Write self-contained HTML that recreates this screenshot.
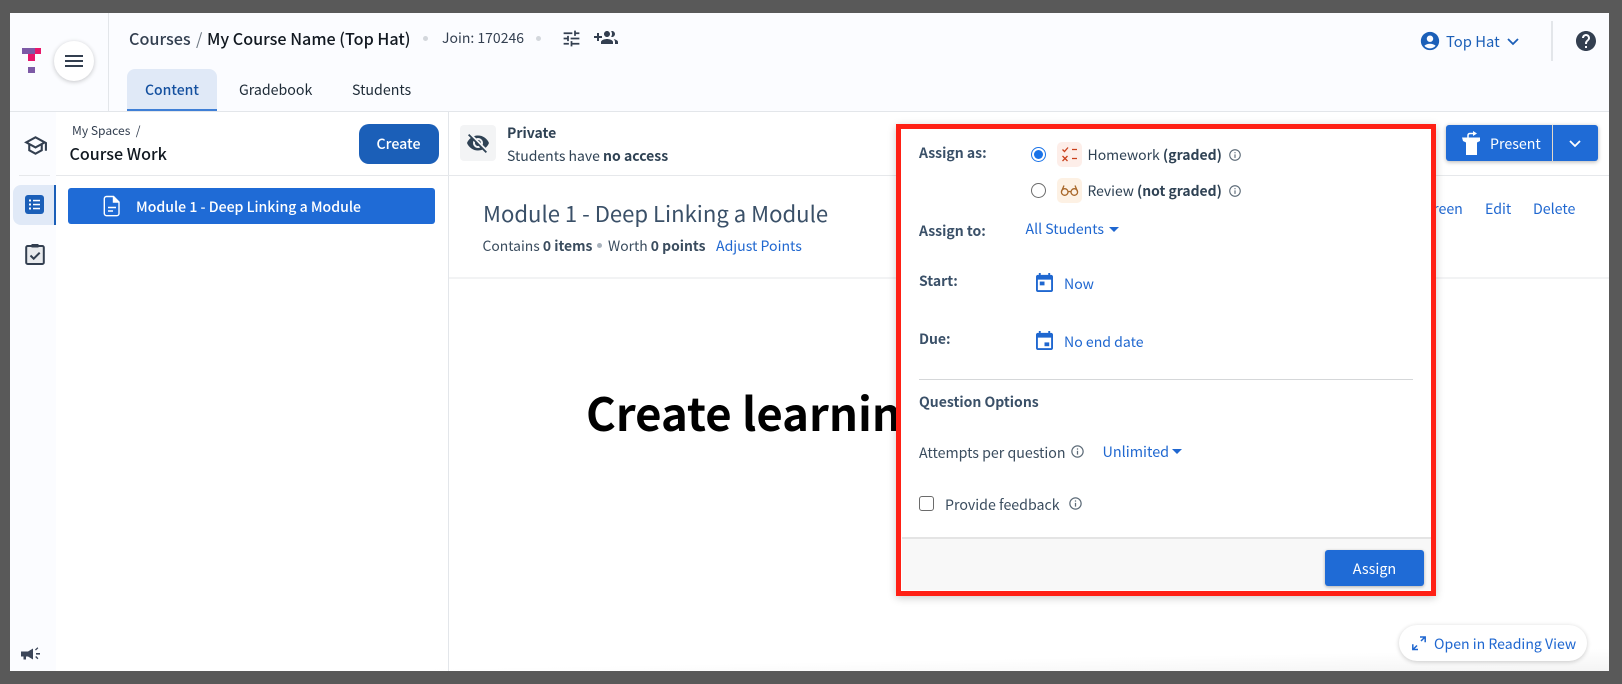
<!DOCTYPE html>
<html><head><meta charset="utf-8"><style>
html,body{margin:0;padding:0;width:1622px;height:684px;overflow:hidden;background:#595959}
body{font-family:"Noto Sans CJK JP","Liberation Sans",sans-serif;position:relative;font-size:14px;color:#2f4254}
.a{position:absolute}
.t{position:absolute;white-space:nowrap;line-height:20px;height:20px}
b{font-weight:500}
svg{position:absolute;display:block}
.l{color:#1f67d0}
</style></head><body>
<svg width="0" height="0" style="position:absolute"><defs>
<symbol id="info" viewBox="0 0 24 24"><path d="M11 7h2v2h-2zm0 4h2v6h-2zm1-9C6.48 2 2 6.48 2 12s4.48 10 10 10 10-4.48 10-10S17.52 2 12 2zm0 18c-4.41 0-8-3.59-8-8s3.59-8 8-8 8 3.59 8 8-3.59 8-8 8z"/></symbol>
</defs></svg>
<div class="a" id="frame" style="left:10px;top:13px;width:1599px;height:658px;background:#fff;overflow:hidden">
<div class="a" style="left:0;top:0;width:1599px;height:98px;background:#fbfcff;border-bottom:1px solid #e3e6ea;box-sizing:content-box"></div>
<div class="a" style="left:98px;top:0;width:1px;height:98px;background:#e3e6ea"></div>
<div class="a" style="left:0;top:99px;width:46px;height:559px;background:#fbfcff"></div>
<div class="a" style="left:438px;top:99px;width:1px;height:559px;background:#e3e6ea"></div>
<div class="a" style="left:46px;top:162px;width:1553px;height:1px;background:#e6e8eb"></div>
<div class="a" style="left:9px;top:162px;width:31px;height:1px;background:#e6e8eb"></div>
<div class="a" style="left:439px;top:264px;width:1160px;height:2px;background:#f2f3f4"></div>
<div class="a" style="left:0;top:630px;width:1599px;height:28px;background:linear-gradient(to bottom right,rgba(255,255,255,0) 60%,#f4f4f4)"></div>
</div>

<!-- logo -->
<div class="a" style="left:22px;top:48px;width:13px;height:6px;background:#7d5aa6"></div>
<div class="a" style="left:35px;top:48px;width:6px;height:6px;background:#e8176b"></div>
<div class="a" style="left:28px;top:54px;width:7px;height:7px;background:#e8176b"></div>
<div class="a" style="left:28px;top:67px;width:7px;height:6px;background:#7d5aa6"></div>
<div class="a" style="left:54px;top:41px;width:40px;height:40px;border-radius:50%;background:#fff;box-shadow:0 1px 5px rgba(0,0,0,.22)"></div>
<svg style="left:62px;top:49px" width="24" height="24" viewBox="0 0 24 24" fill="#333f50"><path d="M3 18h18v-2H3v2zm0-5h18v-2H3v2zm0-7v2h18V6H3z"/></svg>

<!-- header -->
<div class="t" style="left:129px;top:28px;font-size:16.2px;font-weight:500;color:#333f50">Courses</div>
<div class="t" style="left:196px;top:28px;font-size:16.2px;color:#6d7782">/</div>
<div class="t" style="left:207px;top:28px;font-size:16.15px;font-weight:500;color:#111820">My Course Name (Top Hat)</div>
<div class="a" style="left:423px;top:36px;width:5px;height:5px;border-radius:50%;background:#d3d7dc"></div>
<div class="t" style="left:442px;top:28px;font-size:14px;color:#333f50">Join: 170246</div>
<div class="a" style="left:536px;top:36px;width:5px;height:5px;border-radius:50%;background:#d3d7dc"></div>
<svg style="left:561px;top:28px" width="21" height="21" viewBox="0 0 24 24" fill="#333f50"><path d="M3 17v2h6v-2H3zM3 5v2h10V5H3zm10 16v-2h8v-2h-8v-2h-2v6h2zM7 9v2H3v2h4v2h2V9H7zm14 4v-2H11v2h10zm-6-4h2V7h4V5h-4V3h-2v6z"/></svg>
<svg style="left:594px;top:26px" width="24" height="24" viewBox="0 0 24 24" fill="#333f50"><path d="M8 10H5V7H3v3H0v2h3v3h2v-3h3v-2zm10 1c1.66 0 2.99-1.34 2.99-3S19.66 5 18 5c-.32 0-.63.05-.91.14.57.81.9 1.79.9 2.86s-.34 2.04-.9 2.86c.28.09.59.14.91.14zm-5 0c1.66 0 2.99-1.34 2.99-3S14.66 5 13 5c-1.66 0-3 1.34-3 3s1.34 3 3 3zm6.62 2.16c.83.73 1.38 1.66 1.38 2.84v2h3v-2c0-1.54-2.37-2.49-4.38-2.84zM13 13c-2 0-6 1-6 3v2h12v-2c0-2-4-3-6-3z"/></svg>
<div class="a" style="left:127px;top:69px;width:90px;height:42px;box-sizing:border-box;background:#e0e9f7;border-radius:8px 8px 0 0;border-bottom:2px solid #3f7fd6"></div>
<div class="t" style="left:145px;top:80px;font-size:14px;font-weight:500;color:#14509f">Content</div>
<div class="t" style="left:239px;top:80px;font-size:14.2px;color:#1d2a36">Gradebook</div>
<div class="t" style="left:352px;top:80px;font-size:14.2px;color:#1d2a36">Students</div>

<svg style="left:1419px;top:30px" width="22" height="22" viewBox="0 0 24 24" fill="#1b5fb8"><path d="M12 2C6.48 2 2 6.48 2 12s4.48 10 10 10 10-4.48 10-10S17.52 2 12 2zm0 4c1.93 0 3.5 1.57 3.5 3.5S13.93 13 12 13s-3.5-1.57-3.5-3.5S10.07 6 12 6zm0 14c-2.03 0-4.43-.82-6.14-2.88C7.55 15.8 9.68 15 12 15s4.45.8 6.14 2.12C16.43 19.18 14.03 20 12 20z"/></svg>
<div class="t" style="left:1446px;top:32px;font-size:14.8px;color:#1b5fb8">Top Hat</div>
<svg style="left:1506px;top:36px" width="14" height="12" viewBox="0 0 14 12" fill="none" stroke="#1b5fb8" stroke-width="1.8"><path d="M2 3l5 5 5-5"/></svg>
<div class="a" style="left:1551px;top:21px;width:2px;height:40px;background:#e3e6ea"></div>
<svg style="left:1574px;top:29px" width="24" height="24" viewBox="0 0 24 24" fill="#333f50"><path d="M12 2C6.48 2 2 6.48 2 12s4.48 10 10 10 10-4.48 10-10S17.52 2 12 2zm1 17h-2v-2h2v2zm2.07-7.75l-.9.92C13.45 12.9 13 13.5 13 15h-2v-.5c0-1.1.45-2.1 1.17-2.83l1.24-1.26c.37-.36.59-.86.59-1.41 0-1.1-.9-2-2-2s-2 .9-2 2H8c0-2.21 1.79-4 4-4s4 1.79 4 4c0 .88-.36 1.68-.93 2.25z"/></svg>

<!-- rail -->
<svg style="left:23px;top:133px" width="25" height="25" viewBox="0 0 24 24" fill="#333f50"><path d="M12 3L1 9l4 2.18v6L12 21l7-3.82v-6l2-1.09V17h2V9L12 3zm6.82 6L12 12.72 5.18 9 12 5.28 18.82 9zM17 15.99l-5 2.73-5-2.73v-3.72L12 15l5-2.73v3.72z"/></svg>
<div class="a" style="left:13px;top:185px;width:43px;height:40px;box-sizing:border-box;background:#e0e9f7;border-right:2px solid #1b5fb8;border-radius:8px 0 0 8px"></div>
<div class="a" style="left:25px;top:195px;width:19px;height:19px;border-radius:3px;background:#1b5fb8"></div>
<svg style="left:25px;top:195px" width="19" height="19" viewBox="0 0 19 19" fill="#fff"><rect x="4" y="4.5" width="2" height="2"/><rect x="4" y="8.5" width="2" height="2"/><rect x="4" y="12.5" width="2" height="2"/><rect x="8" y="4.8" width="7" height="1.5"/><rect x="8" y="8.8" width="7" height="1.5"/><rect x="8" y="12.8" width="7" height="1.5"/></svg>
<svg style="left:23px;top:242px" width="24" height="25" viewBox="0 0 24 25" fill="none"><rect x="3.2" y="4" width="17.6" height="18" rx="1.5" fill="#e9ebee" stroke="#333f50" stroke-width="2"/><rect x="8.5" y="2" width="7" height="3.5" fill="#333f50"/><path d="M7.5 13.5l3.2 3.2 6-6" stroke="#333f50" stroke-width="2"/></svg>
<svg style="left:20px;top:646px" width="21" height="16" viewBox="0 0 21 16" fill="#3b4558"><path d="M1 5.5h7l5-3v11l-5-3H6v3H3.5v-3H1z"/><rect x="16" y="7" width="4" height="1.6"/><path d="M15 3.5l2.5-2.2.8 1-2.4 2.2zM15.2 11l1-1 2.2 2.2-1 1z"/></svg>

<!-- left panel -->
<div class="t" style="left:72px;top:121px;font-size:12.1px;color:#333f50">My Spaces&nbsp;&nbsp;/</div>
<div class="t" style="left:69.5px;top:143px;font-size:16.1px;font-weight:500;color:#111820">Course Work</div>
<div class="a" style="left:359px;top:124px;width:80px;height:40px;background:#1b5fb8;border-radius:10px"></div>
<div class="t" style="left:358.5px;top:134px;width:80px;text-align:center;font-size:14.2px;font-weight:500;color:#fff">Create</div>
<div class="a" style="left:68px;top:188px;width:367px;height:36px;background:#1f6bd6;border-radius:3px"></div>
<svg style="left:103px;top:195px" width="18" height="22" viewBox="0 0 18 22" fill="none" stroke="#fff" stroke-width="1.4"><path d="M3.5 1.5h7l5.5 5.5v11.5a2.2 2.2 0 0 1-2.2 2.2H3.5a2.2 2.2 0 0 1-2.2-2.2V3.7a2.2 2.2 0 0 1 2.2-2.2z"/><path d="M10.5 1.5v5.5H16" fill="#fff"/><path d="M5 12.5h8M5 16h5" stroke-width="1.6"/></svg>
<div class="t" style="left:136px;top:197px;font-size:14.1px;font-weight:500;color:#fff">Module 1 - Deep Linking a Module</div>

<!-- private -->
<div class="a" style="left:460px;top:125px;width:36px;height:36px;background:#f3f4f5;border-radius:4px"></div>
<svg style="left:466px;top:131px" width="24" height="24" viewBox="0 0 24 24" fill="#2f4254"><path d="M12 7c2.76 0 5 2.24 5 5 0 .65-.13 1.26-.36 1.83l2.92 2.92c1.51-1.26 2.7-2.89 3.43-4.75-1.73-4.39-6-7.5-11-7.5-1.4 0-2.74.25-3.98.7l2.16 2.16C10.74 7.13 11.35 7 12 7zM2 4.27l2.28 2.28.46.46C3.08 8.3 1.78 10.02 1 12c1.73 4.39 6 7.5 11 7.5 1.55 0 3.03-.3 4.38-.84l.42.42L19.73 22 21 20.73 3.27 3 2 4.27zM7.53 9.8l1.55 1.55c-.05.21-.08.43-.08.65 0 1.66 1.34 3 3 3 .22 0 .44-.03.65-.08l1.55 1.55c-.67.33-1.41.53-2.2.53-2.76 0-5-2.24-5-5 0-.79.2-1.53.53-2.2zm4.31-.78l3.15 3.15.02-.16c0-1.66-1.34-3-3-3l-.17.01z"/></svg>
<div class="t" style="left:507px;top:123px;font-size:14px;font-weight:700;color:#2f4254">Private</div>
<div class="t" style="left:507px;top:146px;font-size:14px;color:#2f4254">Students have <b style="font-weight:700">no access</b></div>

<div class="t" style="left:483px;top:201px;height:24px;line-height:24px;font-size:22.1px;color:#3a5068">Module 1 - Deep Linking a Module</div>
<div class="t" style="left:482.5px;top:236px;font-size:13.9px;color:#3a4c5e">Contains <b style="font-weight:700">0 items</b></div>
<div class="a" style="left:597px;top:243px;width:5px;height:5px;border-radius:50%;background:#a9b3bd"></div>
<div class="t" style="left:608px;top:236px;font-size:13.9px;color:#3a4c5e">Worth <b style="font-weight:700">0 points</b></div>
<div class="t l" style="left:716px;top:236px;font-size:14.1px">Adjust Points</div>

<div class="t" style="left:586px;top:392px;height:40px;line-height:40px;font-size:45.5px;font-weight:700;color:#000">Create learning</div>

<!-- right -->
<div class="a" style="left:1446px;top:125px;width:152px;height:36px;background:#1f6bd6;border-radius:3px;box-shadow:0 1px 4px rgba(0,0,0,.3)"></div>
<div class="a" style="left:1552px;top:125px;width:1px;height:36px;background:#e5d9c8"></div>
<svg style="left:1461px;top:131px" width="20" height="25" viewBox="0 0 20 25" fill="#fff"><path d="M1 6.5h18v3.5l-3 1.5V24H5V11.5L2 10z"/><path d="M7 6.5V4.5q0-2 2-2h4" fill="none" stroke="#fff" stroke-width="1.5"/><path d="M12 0l4 2.5-4 2.5z"/></svg>
<div class="t" style="left:1490px;top:134px;font-size:14.2px;color:#fff">Present</div>
<svg style="left:1568px;top:138px" width="14" height="12" viewBox="0 0 14 12" fill="none" stroke="#fff" stroke-width="1.8"><path d="M2 3l5 5 5-5"/></svg>
<div class="t l" style="left:1485px;top:199px;font-size:14.2px">Edit</div>
<div class="t l" style="left:1533px;top:199px;font-size:14.2px">Delete</div>
<div class="t l" style="left:1390px;top:199px;font-size:14.2px">Full Screen</div>

<div class="a" style="left:1399px;top:625px;width:188px;height:36px;border-radius:18px;background:#fff;box-shadow:0 1px 5px rgba(0,0,0,.2)"></div>
<svg style="left:1411px;top:635px" width="16" height="16" viewBox="0 0 16 16" fill="none" stroke="#1f67d0" stroke-width="1.5"><path d="M9 2h5.2v5.2M14 2L10 6M7 14.5H1.8V9.3M2 14.5L6 10.5"/></svg>
<div class="t l" style="left:1434px;top:634px;font-size:14.1px">Open in Reading View</div>

<!-- popover -->
<div class="a" style="left:896px;top:124px;width:540px;height:472px;box-sizing:border-box;border:5.5px solid #ff2015;background:#fff;box-shadow:0 2px 8px rgba(0,0,0,.2)"></div>
<div class="a" style="left:902px;top:537px;width:529px;height:53px;background:#f8f8f8;border-top:2px solid #e4e4e4;box-sizing:border-box"></div>

<div class="t" style="left:919px;top:143px;font-size:14px;font-weight:700;color:#3a5068">Assign as:</div>
<div class="a" style="left:1031px;top:147px;width:15px;height:15px;box-sizing:border-box;border-radius:50%;border:1.5px solid #1a73e8;background:#fff"></div>
<div class="a" style="left:1034px;top:150px;width:9px;height:9px;border-radius:50%;background:#1a73e8"></div>
<div class="a" style="left:1057px;top:142px;width:25px;height:25px;background:#fdeee9;border-radius:5px"></div>
<svg style="left:1061px;top:146px" width="17" height="17" viewBox="0 0 17 17" fill="none" stroke="#c9401c" stroke-width="1.3"><path d="M1.5 3.5l2 2 3.5-4M1.5 10l5 5M6.5 10l-5 5M11 3.5h5M11 12.5h5"/></svg>
<div class="t" style="left:1087.5px;top:145px;font-size:14px;color:#2f4254">Homework <b style="font-weight:700">(graded)</b></div>
<svg style="left:1228px;top:148px" width="14" height="14" fill="#5d6b78"><use href="#info" width="14" height="14"/></svg>

<div class="a" style="left:1031px;top:183px;width:15px;height:15px;box-sizing:border-box;border-radius:50%;border:1.2px solid #6b6b6b;background:#fff"></div>
<div class="a" style="left:1057px;top:178px;width:25px;height:25px;background:#fdf1e4;border-radius:5px"></div>
<svg style="left:1060px;top:184px" width="19" height="13" viewBox="0 0 19 13" fill="none" stroke="#a8672a" stroke-width="1.3"><circle cx="4.7" cy="8" r="3.3"/><circle cx="14.3" cy="8" r="3.3"/><path d="M8 8q1.5-1 3 0M1.5 7.5L4 1.5M17.5 7.5L15 1.5"/></svg>
<div class="t" style="left:1087.5px;top:181px;font-size:13.9px;color:#2f4254">Review <b style="font-weight:700">(not graded)</b></div>
<svg style="left:1228px;top:184px" width="14" height="14" fill="#5d6b78"><use href="#info" width="14" height="14"/></svg>

<div class="t" style="left:919px;top:221px;font-size:14px;font-weight:700;color:#3a5068">Assign to:</div>
<div class="t l" style="left:1025.5px;top:219px;font-size:14.1px">All Students</div>
<div class="a" style="left:1109px;top:227px;border:5.5px solid transparent;border-top:5.5px solid #1f67d0;border-bottom:0"></div>

<div class="t" style="left:919px;top:271px;font-size:14px;font-weight:700;color:#3a5068">Start:</div>
<svg style="left:1036px;top:273px" width="17" height="19" viewBox="3 2 18 20" preserveAspectRatio="none" fill="#1f67d0"><path d="M19 4h-1V2h-2v2H8V2H6v2H5c-1.1 0-2 .9-2 2v14c0 1.1.9 2 2 2h14c1.1 0 2-.9 2-2V6c0-1.1-.9-2-2-2zm0 16H5V9h14v11z"/><rect x="7" y="11" width="5" height="4"/></svg>
<div class="t l" style="left:1064px;top:274px;font-size:14.1px">Now</div>

<div class="t" style="left:919px;top:329px;font-size:14px;font-weight:700;color:#3a5068">Due:</div>
<svg style="left:1036px;top:331px" width="17" height="19" viewBox="3 2 18 20" preserveAspectRatio="none" fill="#1f67d0"><path d="M19 4h-1V2h-2v2H8V2H6v2H5c-1.1 0-2 .9-2 2v14c0 1.1.9 2 2 2h14c1.1 0 2-.9 2-2V6c0-1.1-.9-2-2-2zm0 16H5V9h14v11z"/><rect x="12" y="14" width="5" height="4"/></svg>
<div class="t l" style="left:1064px;top:332px;font-size:14.1px">No end date</div>

<div class="a" style="left:919px;top:379px;width:494px;height:1px;background:#d5d7d9"></div>
<div class="t" style="left:919px;top:392px;font-size:14px;font-weight:700;color:#3a5068">Question Options</div>

<div class="t" style="left:919px;top:443px;font-size:14.2px;color:#3a4c5e">Attempts per question</div>
<svg style="left:1070px;top:444px" width="15" height="15" fill="#5d6b78"><use href="#info" width="15" height="15"/></svg>
<div class="t l" style="left:1102.5px;top:442px;font-size:14.4px">Unlimited</div>
<div class="a" style="left:1172px;top:449px;border:5.5px solid transparent;border-top:5.5px solid #1f67d0;border-bottom:0"></div>

<div class="a" style="left:919px;top:496px;width:15px;height:15px;box-sizing:border-box;border:1.2px solid #6b6b6b;border-radius:3px;background:#fff"></div>
<div class="t" style="left:945px;top:495px;font-size:14.2px;color:#3a4c5e">Provide feedback</div>
<svg style="left:1068px;top:496px" width="15" height="15" fill="#5d6b78"><use href="#info" width="15" height="15"/></svg>

<div class="a" style="left:1325px;top:550px;width:99px;height:36px;background:#1f6bd6;border-radius:3px;box-shadow:0 1px 3px rgba(0,0,0,.3)"></div>
<div class="t" style="left:1325px;top:559px;width:99px;text-align:center;font-size:14.4px;color:#fff">Assign</div>
</body></html>
